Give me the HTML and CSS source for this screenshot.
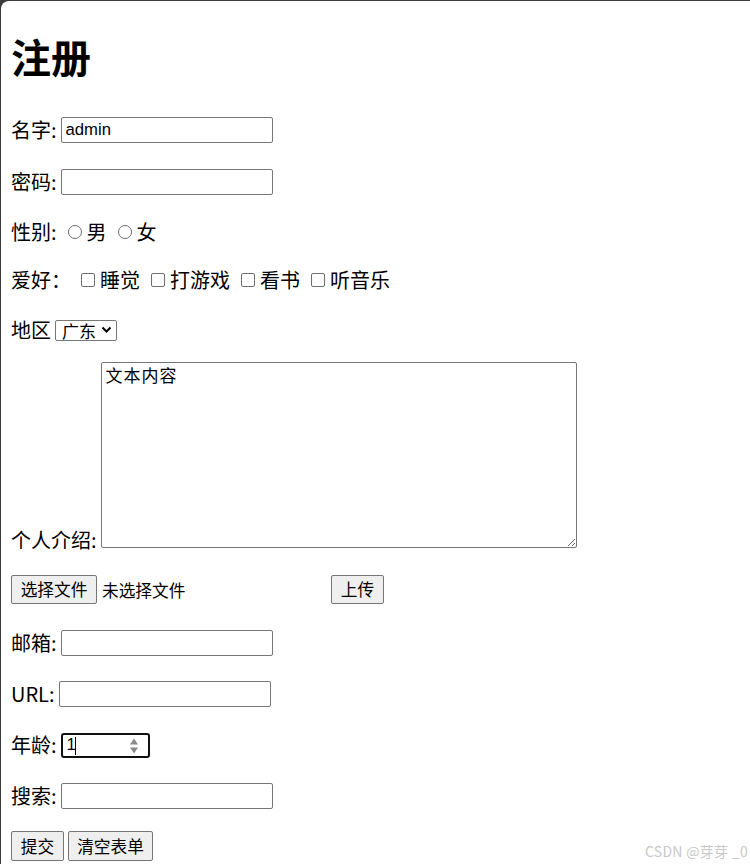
FILE: index.html
```html
<!DOCTYPE html>
<html lang="zh">
<head>
<meta charset="utf-8">
<title>注册</title>
<link rel="stylesheet" href="styles.css">
</head>
<body>
<div class="window">
  <form class="page">
    <h1 class="title">注册</h1>
    <div class="row r-input">
      <span class="lbl">名字:</span>
      <input class="text" type="text" value="admin">
    </div>
    <div class="row r-input">
      <span class="lbl">密码:</span>
      <input class="text" type="password">
    </div>
    <div class="row r-text">
      <span class="lbl">性别:</span>
      <input class="radio first" type="radio" name="sex"><span>男</span>
      <input class="radio" type="radio" name="sex"><span>女</span>
    </div>
    <div class="row r-text">
      <span class="lbl">爱好：</span>
      <input class="check first" type="checkbox"><span>睡觉</span>
      <input class="check" type="checkbox"><span>打游戏</span>
      <input class="check" type="checkbox"><span>看书</span>
      <input class="check" type="checkbox"><span>听音乐</span>
    </div>
    <div class="row r-input">
      <span class="lbl">地区</span>
      <span class="select">广东<svg class="chev" width="11" height="8" viewBox="0 0 11 8"><path d="M1.5 1.5 L5.5 5.5 L9.5 1.5" fill="none" stroke="#000" stroke-width="2"/></svg></span>
    </div>
    <div class="row r-area">
      <span class="lbl area-lbl">个人介绍:</span>
      <textarea class="area">文本内容</textarea>
    </div>
    <div class="row r-file">
      <span class="file">
        <button class="btn btn-file" type="button">选择文件</button>
        <span class="file-name">未选择文件</span>
      </span>
      <button class="btn btn-2" type="button">上传</button>
    </div>
    <div class="row r-line r-email">
      <span class="lbl">邮箱:</span>
      <input class="text" type="email">
    </div>
    <div class="row r-line">
      <span class="lbl">URL:</span>
      <input class="text" type="url">
    </div>
    <div class="row r-line">
      <span class="lbl">年龄:</span>
      <span class="number-wrap">
        <input class="number" type="text" value="1">
        <span class="caret"></span>
        <svg class="spin" width="10" height="18" viewBox="0 0 10 18"><path d="M5 1.5 L9 7.5 L1 7.5 Z" fill="#8a8a8a"/><path d="M5 16.5 L9 10.5 L1 10.5 Z" fill="#8a8a8a"/></svg>
      </span>
    </div>
    <div class="row r-line">
      <span class="lbl">搜索:</span>
      <input class="text" type="search">
    </div>
    <div class="row r-buttons">
      <button class="btn btn-2" type="submit">提交</button>
      <button class="btn btn-4" type="reset">清空表单</button>
    </div>
  </form>
  <div class="watermark">CSDN @芽芽 _0</div>
</div>
</body>
</html>
```
FILE: styles.css
```css
html {
  background: #3b3b3b;
  margin: 0;
  padding: 0;
}
body {
  margin: 0;
  padding: 1px 0 0 1px;
  font-family: "Noto Sans CJK SC", "Noto Sans", sans-serif;
  font-size: 20px;
  color: #000;
}
.window {
  position: relative;
  background: #fff;
  border-top-left-radius: 8px;
  height: 863px;
  overflow: hidden;
}
.page {
  display: flex;
  flex-direction: column;
  padding: 31px 0 0 10px;
}
.title {
  margin: 0;
  font-size: 40px;
  line-height: 48px;
  font-weight: 700;
  height: 48px;
}
.row {
  display: flex;
  align-items: center;
  margin-top: 20px;
  line-height: 28px;
  white-space: nowrap;
}
.r-input { height: 32px; }
.title + .row { margin-top: 34px; }
.r-text { height: 28px; }
.r-area {
  height: 192px;
  align-items: flex-start;
  margin-top: 16px;
}
.r-file { height: 31px; }
.r-line { height: 30px; margin-top: 21px; }
.r-line.r-email { margin-top: 23px; }
.r-buttons { height: 30px; margin-top: 20px; }
.lbl { margin-right: 4px; }
.area-lbl {
  align-self: flex-end;
  margin-right: 4px;
}
.text {
  box-sizing: border-box;
  width: 212px;
  height: 26px;
  margin: 0;
  padding: 1px 4px;
  border: 1px solid #767676;
  border-radius: 2px;
  background: #fff;
  font-family: "Liberation Sans", Arial, sans-serif;
  font-size: 16.7px;
  color: #000;
  outline: none;
  -webkit-appearance: none;
  appearance: none;
}
.radio, .check {
  -webkit-appearance: none;
  appearance: none;
  box-sizing: border-box;
  width: 14px;
  height: 14px;
  min-width: 14px;
  margin: 0 5px 0 11px;
  border: 1px solid #6f6f6f;
  background: #fff;
  flex: none;
}
.radio { border-radius: 50%; }
.radio.first { margin-left: 7px; }
.check { border-radius: 2px; }
.check.first { margin-left: 6px; }
.select {
  box-sizing: border-box;
  display: inline-flex;
  align-items: center;
  justify-content: space-between;
  width: 62px;
  height: 21px;
  padding: 0 4px 0 6px;
  border: 1px solid #767676;
  border-radius: 2px;
  font-size: 17px;
  line-height: 19px;
}
.chev { flex: none; }
.area {
  box-sizing: border-box;
  width: 476px;
  height: 186px;
  margin: 0;
  padding: 0 4px;
  border: 1px solid #767676;
  border-radius: 2px;
  font-family: "Noto Sans CJK SC", sans-serif;
  font-weight: 400;
  font-size: 17px;
  letter-spacing: 1px;
  line-height: 23px;
  color: #000;
  outline: none;
}
.file {
  display: inline-flex;
  align-items: center;
  width: 320px;
}
.btn {
  box-sizing: border-box;
  height: 29px;
  margin: 0;
  padding: 0;
  border: 1px solid #767676;
  border-radius: 2px;
  background: #efefef;
  font-family: "Noto Sans CJK SC", sans-serif;
  font-size: 16.7px;
  line-height: 27px;
  color: #000;
  text-align: center;
}
.btn-file { width: 86px; }
.btn-2 { width: 53px; }
.btn-4 { width: 85px; }
.r-buttons .btn { height: 30px; }
.r-buttons .btn + .btn { margin-left: 4px; }
.file-name {
  margin-left: 5px;
  font-size: 16.7px;
}
.number-wrap {
  position: relative;
  display: flex;
  width: 89px;
  height: 25px;
}
.number {
  box-sizing: border-box;
  width: 89px;
  height: 25px;
  margin: 0;
  padding: 0 0 0 4px;
  border: 2px solid #101010;
  border-radius: 3px;
  font-family: "Liberation Sans", Arial, sans-serif;
  font-size: 16.7px;
  color: #000;
  outline: none;
  background: #fff;
}
.caret {
  position: absolute;
  left: 14px;
  top: 4px;
  width: 1px;
  height: 18px;
  background: #000;
}
.spin {
  position: absolute;
  right: 11px;
  top: 4px;
}
.watermark {
  position: absolute;
  right: 2px;
  bottom: 4px;
  font-family: "Noto Sans CJK SC", sans-serif;
  font-size: 14px;
  line-height: 18px;
  letter-spacing: 0.3px;
  color: #c8c8c8;
}
```
